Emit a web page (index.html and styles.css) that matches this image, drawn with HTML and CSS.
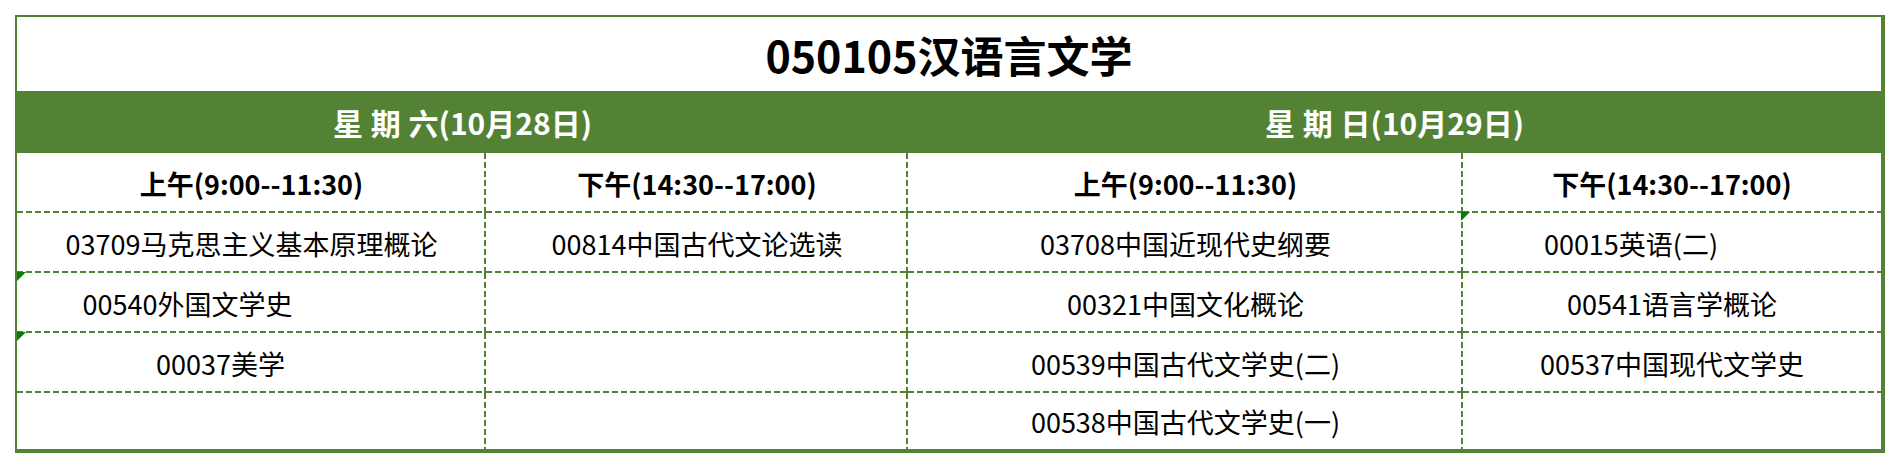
FILE: index.html
```html
<!DOCTYPE html>
<html lang="zh-CN">
<head>
<meta charset="utf-8">
<title>050105汉语言文学</title>
<link rel="stylesheet" href="styles.css">
</head>
<body>
<div class="page">
  <div class="sheet">
    <div class="title">050105汉语言文学</div>

    <div class="day">星 期 六(10月28日)</div>
    <div class="day">星 期 日(10月29日)</div>

    <div class="cell head">上午(9:00--11:30)</div>
    <div class="cell head">下午(14:30--17:00)</div>
    <div class="cell head">上午(9:00--11:30)</div>
    <div class="cell head last-col">下午(14:30--17:00)</div>

    <div class="cell">03709马克思主义基本原理概论</div>
    <div class="cell">00814中国古代文论选读</div>
    <div class="cell">03708中国近现代史纲要</div>
    <div class="cell last-col flag flag-inner pad-82">00015英语(二)</div>

    <div class="cell flag pad-128">00540外国文学史</div>
    <div class="cell"></div>
    <div class="cell">00321中国文化概论</div>
    <div class="cell last-col">00541语言学概论</div>

    <div class="cell flag pad-62">00037美学</div>
    <div class="cell"></div>
    <div class="cell">00539中国古代文学史(二)</div>
    <div class="cell last-col">00537中国现代文学史</div>

    <div class="cell last-row"></div>
    <div class="cell last-row"></div>
    <div class="cell last-row">00538中国古代文学史(一)</div>
    <div class="cell last-row last-col"></div>
  </div>
</div>
</body>
</html>
```

FILE: styles.css
```css
html, body {
  margin: 0;
  padding: 0;
  background: #ffffff;
}

body {
  font-family: "Noto Sans CJK SC", "Noto Sans", sans-serif;
  color: #000000;
}

.page {
  padding: 15px;
}

.sheet {
  display: grid;
  grid-template-columns: 469px 422px 555px 418px;
  grid-template-rows: 74px 62px 60px 60px 60px 60px 56px;
  width: fit-content;
  border-style: solid;
  border-color: #548235;
  border-width: 2px 4px 4px 2px;
}

.title {
  grid-column: 1 / -1;
  display: flex;
  align-items: center;
  justify-content: center;
  font-size: 43px;
  font-weight: 700;
  line-height: 1;
}

.day {
  grid-column: span 2;
  background: #548235;
  color: #ffffff;
  display: flex;
  align-items: center;
  justify-content: center;
  font-size: 30px;
  font-weight: 700;
  line-height: 1;
  word-spacing: 1px;
}

.cell {
  position: relative;
  display: flex;
  align-items: center;
  justify-content: center;
  font-size: 27px;
  line-height: 1;
  white-space: nowrap;
  background:
    repeating-linear-gradient(to right, #548235 0 6px, transparent 6px 9px) left bottom / 100% 2px no-repeat,
    repeating-linear-gradient(to bottom, #548235 0 6px, transparent 6px 9px) right top / 2px 100% no-repeat;
}

.cell.last-col {
  background:
    repeating-linear-gradient(to right, #548235 0 6px, transparent 6px 9px) left bottom / 100% 2px no-repeat;
}

.cell.last-row {
  background:
    repeating-linear-gradient(to bottom, #548235 0 6px, transparent 6px 9px) right top / 2px 100% no-repeat;
}

.cell.last-row.last-col {
  background: none;
}

.head {
  font-weight: 700;
  font-size: 27px;
}

.flag::before {
  content: "";
  position: absolute;
  top: -1px;
  left: 0;
  width: 0;
  height: 0;
  border-top: 9px solid #0b7a0b;
  border-right: 9px solid transparent;
}

.flag-inner::before {
  left: -2px;
}

.pad-62 {
  padding-right: 62px;
}

.pad-82 {
  padding-right: 82px;
}

.pad-128 {
  padding-right: 128px;
}
```
